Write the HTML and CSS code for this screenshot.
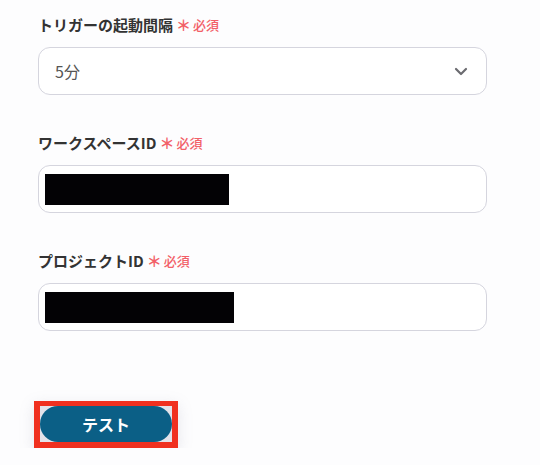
FILE: index.html
```html
<!DOCTYPE html>
<html lang="ja">
<head>
<meta charset="utf-8">
<link rel="stylesheet" href="styles.css">
</head>
<body>
<div class="form">
  <div class="field">
    <div class="label">トリガーの起動間隔<span class="req"><span class="ast">＊</span>必須</span></div>
    <div class="input select">
      <span class="value">5分</span>
      <svg class="chev" width="14" height="9" viewBox="0 0 14 9"><path d="M2 2 L7 7 L12 2" fill="none" stroke="#6b6b70" stroke-width="2.2" stroke-linecap="round" stroke-linejoin="round"/></svg>
    </div>
  </div>
  <div class="field">
    <div class="label">ワークスペースID<span class="req"><span class="ast">＊</span>必須</span></div>
    <div class="input"><span class="mask mask-ws"></span></div>
  </div>
  <div class="field">
    <div class="label">プロジェクトID<span class="req"><span class="ast">＊</span>必須</span></div>
    <div class="input"><span class="mask mask-pj"></span></div>
  </div>
  <div class="actions">
    <div class="highlight"><button class="btn">テスト</button></div>
  </div>
</div>
</body>
</html>
```
FILE: styles.css
```css
html, body {
  margin: 0;
  padding: 0;
  background: #fdfdfe;
}
body {
  font-family: "Noto Sans CJK JP", "Noto Sans", sans-serif;
  color: #333333;
}
.form {
  width: 449px;
  margin-left: 38px;
  padding-top: 14px;
  display: flex;
  flex-direction: column;
  gap: 37px;
}
.field {
  display: flex;
  flex-direction: column;
  gap: 11px;
}
.label {
  height: 22px;
  line-height: 22px;
  font-size: 15px;
  font-weight: 700;
  color: #333333;
  display: flex;
  align-items: center;
}
.req {
  margin-left: 3px;
  color: #f26068;
  font-size: 13px;
  font-weight: 500;
  display: flex;
  align-items: center;
}
.ast {
  font-size: 15px;
  font-weight: 700;
  margin-right: 2px;
}
.input {
  box-sizing: border-box;
  height: 48px;
  border: 1px solid #d5d5de;
  border-radius: 12px;
  background: #ffffff;
  display: flex;
  align-items: center;
  padding: 0 6px;
}
.select {
  padding: 0 18px 0 16px;
  justify-content: space-between;
}
.value {
  font-size: 16px;
  color: #555555;
}
.chev {
  margin-top: 1px;
}
.mask {
  display: block;
  height: 31px;
  background: #030205;
}
.mask-ws { width: 184px; }
.mask-pj { width: 189px; }
.actions {
  margin-top: 33px;
  display: flex;
}
.highlight {
  margin-left: -4px;
  border: 6px solid #f0301f;
  border-top-width: 5px;
  background: #e3e3ea;
  box-shadow: 0 4px 14px rgba(120, 120, 150, 0.18);
  display: flex;
}
.btn {
  width: 132px;
  height: 36px;
  border: 0;
  border-radius: 18px;
  background: #0b5f86;
  color: #ffffff;
  font-family: "Noto Sans CJK JP", sans-serif;
  font-size: 16px;
  font-weight: 700;
  padding: 0;
  cursor: pointer;
}
```
